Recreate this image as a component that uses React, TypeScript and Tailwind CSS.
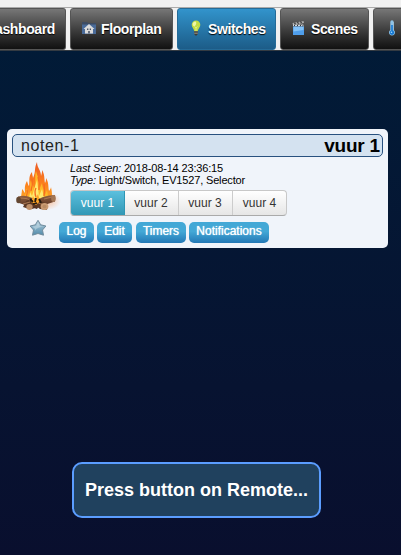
import type { ReactNode } from "react";

function HouseIcon() {
  return (
    <svg className="mb-[2px] shrink-0" width="16" height="16" viewBox="0 0 16 16">
      <path d="M1 2h5l1 1h8v11H1z" fill="#3d4c63" />
      <path d="M1 4.500h14V14H1z" fill="#4a6b99" />
      <path d="M8 4l5.500 5H12v4.500H4V9H2.500z" fill="#dcdcdc" />
      <path d="M6 8.500h1.400V10H6zM8.700 8.500H10V10H8.700zM7.200 11h1.600v2.500H7.200z" fill="#4b5566" />
    </svg>
  );
}

function BulbIcon() {
  return (
    <svg className="mb-[2px] shrink-0" width="16" height="16" viewBox="0 0 16 16">
      <path d="M8 .5a4.300 4.300 0 0 0-4.300 4.400c0 2.300 2.300 3.800 2.500 6.300h3.600c.2-2.500 2.500-4 2.500-6.300A4.300 4.300 0 0 0 8 .5z" fill="#c3dc43" />
      <path d="M7.500 1.500c-2 0-3 1.700-2.800 3.200.2 1.300 1.500 1.800 2.300 1.200 1-.8 2-3.400.5-4.400z" fill="#eef6a8" />
      <path d="M6.700 6.500L8 8l1.300-1.500M8 8v3" stroke="#e8f5a0" strokeWidth=".7" fill="none" />
      <path d="M6.200 11h3.600v3L8.700 15.500H7.300L6.200 14z" fill="#3c3935" />
      <path d="M6.200 12h3.600M6.200 13.500h3.600" stroke="#aaa694" strokeWidth=".6" />
    </svg>
  );
}

function ClapperIcon() {
  return (
    <svg className="mb-[2px] shrink-0" width="16" height="16" viewBox="0 0 16 16">
      <path d="M1.500 3l11-2 .5 2L2 5z" fill="#aaa" />
      <path d="M3.500 2.700l1 1.700M6.500 2l1 1.700M9.500 1.400l1 1.600" stroke="#353535" strokeWidth="1.200" />
      <path d="M2 4.500h11v2H2z" fill="#d3d8de" />
      <path d="M4 4.500l-1 2M7 4.500l-1 2M10 4.500l-1 2M12.500 4.500l-1 2" stroke="#333" />
      <path d="M2 6.500h11v8.500H2z" fill="#4f9eeb" />
      <path d="M2.500 7h10v3l-10 1.500z" fill="#83c2f8" />
    </svg>
  );
}

function ThermometerIcon() {
  return (
    <svg className="mb-[2px] shrink-0" width="16" height="16" viewBox="0 0 16 16">
      <path d="M6.300 2a1.700 1.700 0 0 1 3.400 0v8a3 3 0 1 1-3.400 0z" fill="#8fc3e7" />
      <path d="M7.200 5h1.600v5.500a2.200 2.200 0 1 1-1.600 0z" fill="#1678d2" />
      <path d="M9 3h1M9 5h1M9 7h1M9 9h1" stroke="#d4edfa" strokeWidth=".7" />
      <circle cx="7.500" cy="12.200" r=".8" fill="#a6dcff" />
    </svg>
  );
}

function CampfireIcon() {
  return (
    <svg width="48" height="50" viewBox="0 0 48 50">
      <defs>
        <linearGradient id="flame" x1="0" y1="0" x2="0" y2="1">
          <stop offset="0" stopColor="#ec5a25" />
          <stop offset=".5" stopColor="#fb7c1c" />
          <stop offset="1" stopColor="#ffab28" />
        </linearGradient>
        <linearGradient id="log" x1="0" y1="0" x2="0" y2="1">
          <stop offset="0" stopColor="#936040" />
          <stop offset="1" stopColor="#4a2a1b" />
        </linearGradient>
        <radialGradient id="glow">
          <stop offset="0" stopColor="#ff9955" stopOpacity=".55" />
          <stop offset="1" stopColor="#ff9955" stopOpacity="0" />
        </radialGradient>
      </defs>
      <ellipse cx="34" cy="40" rx="13" ry="9" fill="url(#glow)" />
      <path d="M8 41C6 36 8 33 8 28c2 2 2 3 3 4 0-4-1-7 2-12 1 3 1 4 2 5 1-5-1-9 3-14 0 3 1 4 1 6 3-6 1-10 4-16 0 6 4 8 4 14 1-3 1-4 1-6 3 5 2 8 3 13 1-2 1-3 1-5 3 5 2 8 3 13 1-1 2-3 2-4 1 5 2 10-1 15z" fill="url(#flame)" />
      <path d="M11 41c-2-5 2-8 1-13 3 3 2 5 3 7 3-7 0-11 2-16 1 4 3 6 3 10 3-6 0-12 2-19 2 7 4 11 4 17l2-5c0 5 3 7 2 13 2-2 2-4 3-6 1 6 2 9 0 12z" fill="#ffb928" />
      <path d="M15 40l1-9 2 4 5-16 2 16 3-7 3 12z" fill="#ffe96e" />
      <path d="M11 38q3-5 2-9M17 30q2-6 1-12M25 29q1-7-1-13M30 35q1-6 0-12M22 36q-2-5 0-9" stroke="#f56b20" strokeWidth="1.300" fill="none" />
      <path d="M4 35.500q7-2 13 1l10 5-4 6.500-18-6z" fill="url(#log)" />
      <path d="M41 34q-6 0-12 2L14 43l4 5 23-7.500z" fill="url(#log)" />
      <path d="M12 40l7-3 12 5 2 7-7-1-7-5-4 5-6-2z" fill="#5c3823" />
      <path d="M6 37q7 0 10 2M30 38l8-2M22 41l8 3M9 43l7-2" stroke="#a97650" strokeWidth="1.200" fill="none" />
      <path d="M17 41l2-6 2 4 3-6 2 7-4 4z" fill="#ffa526" />
      <path d="M16 38l3 3M22 37l-1 4M25 38l2 4M19 43l4-1" stroke="#241a10" strokeWidth="1.800" />
      <ellipse cx="4.500" cy="39" rx="2.300" ry="3.300" fill="#634732" />
      <ellipse cx="39.500" cy="37.500" rx="2.300" ry="3.400" fill="#a27654" />
      <ellipse cx="15.500" cy="46" rx="3.200" ry="2.900" fill="#bd8d66" />
      <ellipse cx="30.500" cy="45.500" rx="3.900" ry="3.500" fill="#c99b72" />
      <ellipse cx="30.500" cy="45.500" rx="2" ry="1.700" fill="#b98b62" />
    </svg>
  );
}

function StarIcon() {
  return (
    <svg width="18" height="18" viewBox="0 0 18 18">
      <defs>
        <linearGradient id="star" x1="0" y1="0" x2="0" y2="1">
          <stop offset="0" stopColor="#b3cddb" />
          <stop offset="1" stopColor="#528cac" />
        </linearGradient>
      </defs>
      <path d="M9 1.300l2.700 4.500 5.200 1.200-3.400 4 1 5.200L9 14.500l-5.500 1.700 1-5.200-3.400-4 5.200-1.200z" fill="url(#star)" stroke="#718c9d" strokeLinejoin="round" />
      <path d="M9 3l1.800 4 4 .7c-4 0-7 1-9 4l.4-1.700-3-2.500 4-.5z" fill="#d9e8f0" opacity=".45" />
    </svg>
  );
}

function Tab({ className, active, icon, children }: { className: string; active?: boolean; icon?: ReactNode; children?: ReactNode }) {
  const tone = active
    ? "border-[#246b98] bg-linear-to-b from-[#3294cc] to-[#1c5c88]"
    : "border-[#555] bg-linear-to-b from-[#777] to-[#111]";
  return (
    <div className={`flex h-[42px] shrink-0 items-center gap-1 rounded-[3px] border text-[14px] font-bold tracking-[-0.38px] text-white [text-shadow:0_1px_1px_#000] ${tone} ${className}`}>
      {icon}
      {children && <span className="whitespace-nowrap">{children}</span>}
    </div>
  );
}

function Action({ className, children }: { className: string; children: ReactNode }) {
  return (
    <button className={`flex h-[21px] justify-center rounded-[5px] bg-linear-to-b from-[#43a8d6] from-45% to-[#2378b5] text-[12px] leading-[19px] text-white [text-shadow:0_0_1px_#fff] ${className}`}>
      {children}
    </button>
  );
}

const levels = ["vuur 1", "vuur 2", "vuur 3", "vuur 4"];

export default function App() {
  return (
    <div className="flex h-[555px] w-[401px] flex-col overflow-hidden bg-linear-to-b from-[#001c38] to-[#090f2e] font-['Liberation_Sans',Arial,sans-serif] text-black">
      <nav className="h-[51px] shrink-0 overflow-hidden border-b border-[#343b42] bg-[#f1f1f1] pt-[7px]">
        <div className="flex gap-1 border-t border-[#aaa]">
          <Tab className="w-[66px] justify-end rounded-l-none border-l-0 pr-[10px]">Dashboard</Tab>
          <Tab className="w-[103px] pl-[10px]" icon={<HouseIcon />}>Floorplan</Tab>
          <Tab className="w-[99px] pl-[10px]" active icon={<BulbIcon />}>Switches</Tab>
          <Tab className="w-[89px] pl-[10px]" icon={<ClapperIcon />}>Scenes</Tab>
          <Tab className="w-[103px] pl-[10px]" icon={<ThermometerIcon />} />
        </div>
      </nav>

      <section className="mt-[78px] ml-[7px] h-[119px] w-[381px] shrink-0 rounded-[5px] bg-[#f0f4fa] px-[5px] pt-[5px]">
        <header className="flex h-[23px] items-center justify-between rounded-[5px] border border-[#28517f] bg-[#d4e2f0] pr-[2px] pl-2">
          <span className="text-[16px] tracking-[0.6px] text-[#222]">noten-1</span>
          <span className="text-[19px] leading-[21px] font-bold tracking-[-0.2px]">vuur 1</span>
        </header>
        <div className="flex">
          <div className="flex w-[58px] shrink-0 flex-col">
            <div className="mt-[4px] ml-[2px] h-[58px]"><CampfireIcon /></div>
            <div className="ml-[17px]"><StarIcon /></div>
          </div>
          <div className="pt-[5px]">
            <p className="text-[11px] leading-[12px] tracking-[-0.16px]"><i>Last Seen:</i> 2018-08-14 23:36:15</p>
            <p className="text-[11px] leading-[12px] tracking-[-0.16px]"><i>Type:</i> Light/Switch, EV1527, Selector</p>
            <div className="mt-[4px] flex h-[26px] w-[217px] overflow-hidden rounded-[4px] border border-[#c8c8c8] border-b-[#aaa] bg-linear-to-b from-white to-[#e6e6e6]">
              {levels.map((level, i) => (
                <button key={level} className={`h-[25px] shrink-0 border-r pb-[2px] text-[12px] last:border-r-0 ${i === 0 ? "w-[54px] border-[#2f96b4] bg-linear-to-b from-[#5bc0de] to-[#2f96b4] text-white" : "w-[54px] border-[#ccc] pr-px text-[#333]"}`}>
                  {level}
                </button>
              ))}
            </div>
            <div className="mt-[6px] -ml-[11px] flex">
              <Action className="w-[35px]">Log</Action>
              <Action className="ml-[3px] w-[35px]">Edit</Action>
              <Action className="ml-[4px] w-[50px]">Timers</Action>
              <Action className="ml-[3px] w-[80px]">Notifications</Action>
            </div>
          </div>
        </div>
      </section>

      <div className="mt-[214px] ml-[72px] flex h-[56px] w-[249px] shrink-0 items-center rounded-[10px] border-2 border-[#5b9dff] bg-[#20415e] pl-[11px] text-[18px] font-bold whitespace-nowrap text-white">
        Press button on Remote...
      </div>
    </div>
  );
}
